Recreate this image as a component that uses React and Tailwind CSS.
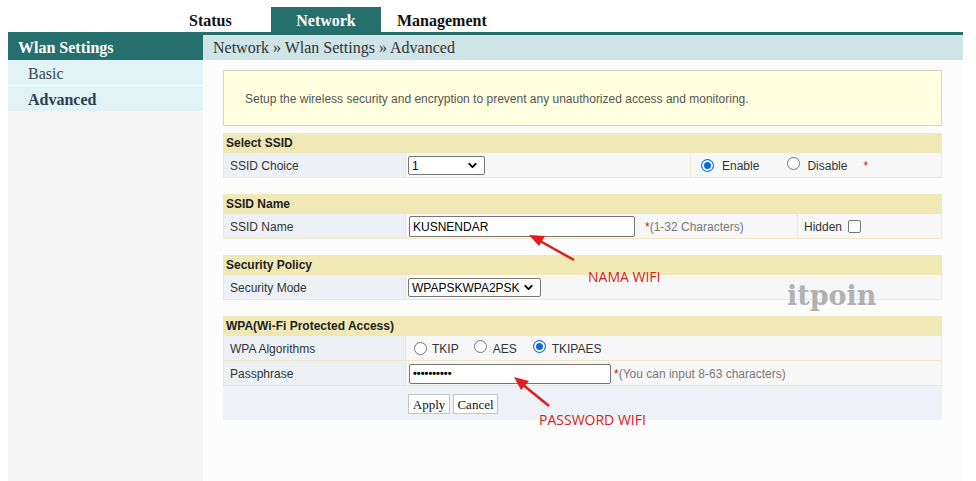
import { ChevronDown } from 'lucide-react'

const serif = "font-['Liberation_Serif','Times_New_Roman',serif]"
const sans = "font-['Liberation_Sans',Arial,sans-serif]"

function Radio({ checked }) {
  return checked ? (
    <span className="inline-block h-[13px] w-[13px] shrink-0 rounded-full border border-[#0b6bd9] bg-[#0b6bd9] shadow-[inset_0_0_0_2px_#fff]" />
  ) : (
    <span className="inline-block h-[13px] w-[13px] shrink-0 rounded-full border border-[#767676] bg-white" />
  )
}

function Select({ value, width }) {
  return (
    <div className={`flex h-[19px] items-center justify-between rounded-[2px] border border-[#767676] bg-white pl-[3px] pr-[5px] text-[12px] text-black ${width}`}>
      <span>{value}</span>
      <ChevronDown size={13} strokeWidth={3.5} className="text-black" />
    </div>
  )
}

function Section({ title, children }) {
  return (
    <div>
      <div className="flex h-[20px] items-center bg-[#f0e9b6] pl-[3px] text-[12px] font-bold text-[#1d1d1d]">{title}</div>
      {children}
    </div>
  )
}

function Row({ label, children, third, valueWidth }) {
  return (
    <div className="flex h-[25px] border-x border-b border-[#efe7c6]">
      <div className="flex w-[181px] items-center bg-[#edf1f5] pl-[6px] pt-[1px] text-[#333]">{label}</div>
      <div className={`flex items-center border-l border-[#efe7c6] bg-[#f7f7f7] pt-[1px] ${valueWidth || 'flex-1'}`}>{children}</div>
      {third && <div className="flex flex-1 items-center border-l border-[#efe7c6] bg-[#f7f7f7] pt-[1px]">{third}</div>}
    </div>
  )
}

export default function App() {
  return (
    <div className={`relative h-[481px] w-[976px] overflow-hidden bg-white ${sans}`}>
      <div className="ml-[8px] flex h-full w-[955px] flex-col">
        {/* top tabs */}
        <div className={`flex h-[32px] items-end pl-[181px] text-[16px] font-bold ${serif}`}>
          <div className="flex h-[25px] w-[82px] items-center pt-[3px] text-[#111]">Status</div>
          <div className="flex h-[25px] w-[110px] items-center justify-center bg-[#25706c] pt-[3px] text-white">Network</div>
          <div className="flex h-[25px] items-center pl-[16px] pt-[3px] text-[#111]">Management</div>
        </div>
        <div className="h-[3px] bg-[#25706c]" />

        <div className="flex flex-1">
          {/* sidebar */}
          <div className={`flex w-[195px] flex-col bg-[#f6f5f5] ${serif} text-[16px]`}>
            <div className="flex h-[25px] items-center bg-[#25706c] pl-[10px] pt-[1px] font-bold text-white">Wlan Settings</div>
            <div className="flex h-[26px] items-center border-b border-[#f3fbfb] bg-[#e1f3f4] pl-[20px] pt-[2px] text-[#3a4756]">Basic</div>
            <div className="flex h-[25px] items-center bg-[#e1f3f4] pl-[20px] pt-[2px] font-bold text-[#2d3e52]">Advanced</div>
          </div>

          {/* content */}
          <div className="flex flex-1 flex-col bg-[#fcfcfc]">
            <div className={`flex h-[25px] items-center bg-[#cfe4e6] pl-[10px] pt-[1px] text-[16px] text-[#333] ${serif}`}>
              Network » Wlan Settings » Advanced
            </div>
            <div className="flex flex-col gap-[16px] pl-[20px] pr-[21px] pt-[10px] text-[12px]">
              <div className="-mb-[9px] flex h-[56px] items-center border border-[#d5d5c8] bg-[#ffffe0] pl-[21px] pt-[1px] text-[#555]">
                Setup the wireless security and encryption to prevent any unauthorized access and monitoring.
              </div>

              <Section title="Select SSID">
                <Row
                  label="SSID Choice"
                  valueWidth="w-[285px]"
                  third={
                    <div className="flex items-center pl-[10px] text-[#333]">
                      <Radio checked />
                      <span className="ml-[8px]">Enable</span>
                      <span className="ml-[28px]"><Radio /></span>
                      <span className="ml-[7px]">Disable</span>
                      <span className="ml-[16px] text-[#d01010]">*</span>
                    </div>
                  }
                >
                  <div className="pl-[2px]"><Select value="1" width="w-[77px]" /></div>
                </Row>
              </Section>

              <Section title="SSID Name">
                <Row
                  label="SSID Name"
                  valueWidth="w-[392px]"
                  third={
                    <div className="flex items-center pl-[6px] text-[#333]">
                      Hidden
                      <span className="ml-[6px] inline-block h-[13px] w-[13px] rounded-[2px] border border-[#767676] bg-white" />
                    </div>
                  }
                >
                  <div className="ml-[3px] flex h-[21px] w-[226px] items-center rounded-[2px] border border-[#767676] bg-white pl-[3px] text-black">KUSNENDAR</div>
                  <span className="ml-[10px] text-[#777]"><span className="text-[#d01010]">*</span>(1-32 Characters)</span>
                </Row>
              </Section>

              <Section title="Security Policy">
                <Row label="Security Mode">
                  <div className="pl-[2px]"><Select value="WPAPSKWPA2PSK" width="w-[133px]" /></div>
                </Row>
              </Section>

              <Section title="WPA(Wi-Fi Protected Access)">
                <Row label="WPA Algorithms">
                  <div className="flex items-center pl-[8px] text-[#333]">
                    <Radio />
                    <span className="ml-[5px]">TKIP</span>
                    <span className="ml-[15px]"><Radio /></span>
                    <span className="ml-[6px]">AES</span>
                    <span className="ml-[16px]"><Radio checked /></span>
                    <span className="ml-[6px]">TKIPAES</span>
                  </div>
                </Row>
                <Row label="Passphrase">
                  <div className="ml-[3px] flex h-[20px] w-[202px] items-center rounded-[2px] border border-[#767676] bg-white pl-[3px] text-[11px] font-bold text-black">••••••••••</div>
                  <span className="ml-[3px] text-[#777]"><span className="text-[#d01010]">*</span>(You can input 8-63 characters)</span>
                </Row>
                <div className={`flex h-[34px] items-start gap-[3px] bg-[#eef1f5] pl-[185px] pt-[8px] text-[13px] ${serif}`}>
                  <button className="h-[20px] w-[42px] border border-[#c4c4c4] bg-white text-[#111]">Apply</button>
                  <button className="h-[20px] w-[45px] border border-[#c4c4c4] bg-white text-[#111]">Cancel</button>
                </div>
              </Section>
            </div>
          </div>
        </div>
      </div>

      {/* watermark */}
      <div className="absolute left-[787px] top-[276px] font-['DejaVu_Serif',serif] text-[27px] font-bold text-[#b1b1b1]">itpoin</div>

      {/* annotations */}
      <div className="absolute left-[588px] top-[266px] font-['Open_Sans',sans-serif] text-[14px] text-[#d8201f]">NAMA WIFI</div>
      <div className="absolute left-[539px] top-[409px] font-['Open_Sans',sans-serif] text-[14px] text-[#d8201f]">PASSWORD WIFI</div>
      <svg className="pointer-events-none absolute left-0 top-0" width="976" height="481">
        <line x1="574" y1="260" x2="540" y2="241" stroke="#e31b1b" strokeWidth="2.5" />
        <polygon points="529,235 545,236 539,246" fill="#e31b1b" />
        <line x1="549" y1="406" x2="522" y2="384" stroke="#e31b1b" strokeWidth="2.5" />
        <polygon points="514,377 529,381 521,390" fill="#e31b1b" />
      </svg>
    </div>
  )
}
